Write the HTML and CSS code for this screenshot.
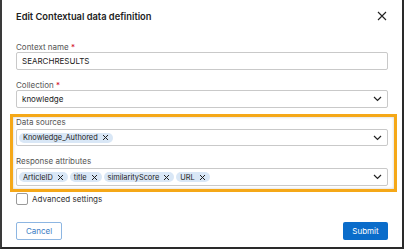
FILE: index.html
```html
<!DOCTYPE html>
<html lang="en">
<head>
    <meta charset="UTF-8">
    <meta name="viewport" content="width=device-width, initial-scale=1.0">
    <title>Edit Contextual data definition</title>
    <link rel="stylesheet" href="styles.css">
</head>
<body>
    <div class="frame">
        <div class="header">
            <h1>Edit Contextual data definition</h1>
            <svg class="close" width="10" height="10" viewBox="0 0 10 10">
                <path d="M1 1 L9 9 M9 1 L1 9" stroke="#222" stroke-width="1.1" fill="none"/>
            </svg>
        </div>

        <div class="field">
            <label>Context name <span class="req">*</span></label>
            <div class="input">SEARCHRESULTS</div>
        </div>

        <div class="field">
            <label>Collection <span class="req">*</span></label>
            <div class="input select">
                <span>knowledge</span>
                <svg class="chevron" width="9" height="6" viewBox="0 0 9 6"><path d="M1 1 L4.5 4.5 L8 1" stroke="#222" stroke-width="1.2" fill="none"/></svg>
            </div>
        </div>

        <div class="highlight">
            <div class="field">
                <label>Data sources</label>
                <div class="input select multi">
                    <div class="chips">
                        <span class="chip">Knowledge_Authored <svg width="7" height="7" viewBox="0 0 7 7"><path d="M1 1 L6 6 M6 1 L1 6" stroke="#222" stroke-width="1" fill="none"/></svg></span>
                    </div>
                    <svg class="chevron" width="9" height="6" viewBox="0 0 9 6"><path d="M1 1 L4.5 4.5 L8 1" stroke="#222" stroke-width="1.2" fill="none"/></svg>
                </div>
            </div>
            <div class="field">
                <label>Response attributes</label>
                <div class="input select multi tall">
                    <div class="chips">
                        <span class="chip">ArticleID <svg width="7" height="7" viewBox="0 0 7 7"><path d="M1 1 L6 6 M6 1 L1 6" stroke="#222" stroke-width="1" fill="none"/></svg></span>
                        <span class="chip">title <svg width="7" height="7" viewBox="0 0 7 7"><path d="M1 1 L6 6 M6 1 L1 6" stroke="#222" stroke-width="1" fill="none"/></svg></span>
                        <span class="chip">similarityScore <svg width="7" height="7" viewBox="0 0 7 7"><path d="M1 1 L6 6 M6 1 L1 6" stroke="#222" stroke-width="1" fill="none"/></svg></span>
                        <span class="chip">URL <svg width="7" height="7" viewBox="0 0 7 7"><path d="M1 1 L6 6 M6 1 L1 6" stroke="#222" stroke-width="1" fill="none"/></svg></span>
                    </div>
                    <svg class="chevron" width="9" height="6" viewBox="0 0 9 6"><path d="M1 1 L4.5 4.5 L8 1" stroke="#222" stroke-width="1.2" fill="none"/></svg>
                </div>
            </div>
        </div>

        <div class="checkbox-row">
            <span class="checkbox"></span>
            <span>Advanced settings</span>
        </div>

        <div class="footer">
            <button class="btn cancel">Cancel</button>
            <button class="btn submit">Submit</button>
        </div>
    </div>
</body>
</html>
```

FILE: styles.css
```css
body {
    margin: 0;
    font-family: Inter, "Noto Sans", sans-serif;
    background: white;
    color: #222;
}
.frame {
    box-sizing: border-box;
    width: 404px;
    height: 249px;
    border-left: 2px solid #3a3a3a;
    border-right: 2px solid #2a2a2a;
    border-bottom: 2px solid #2a2a2a;
    padding: 9px 14px 0 14px;
}
.header {
    display: flex;
    justify-content: space-between;
    align-items: center;
    height: 14px;
    margin-bottom: 19px;
}
.header h1 {
    margin: 0;
    font-size: 9.3px;
    font-weight: 600;
}
.close {
    margin-right: 1px;
}
.field {
    display: flex;
    flex-direction: column;
}
.field + .field {
    margin-top: 10px;
}
.field label {
    font-size: 8px;
    line-height: 10px;
    color: #555;
}
.req {
    color: #d0021b;
}
.input {
    box-sizing: border-box;
    height: 18px;
    border: 1px solid #c9c9c9;
    border-radius: 2px;
    font-size: 8px;
    display: flex;
    align-items: center;
    padding: 0 5px;
}
.select {
    justify-content: space-between;
    padding-right: 5px;
}
.multi {
    height: 17px;
    padding-left: 2px;
}
.multi.tall {
    height: 18px;
}
.highlight label {
    margin-bottom: 2px;
}
.chips {
    display: flex;
    gap: 2px;
}
.chip {
    display: flex;
    align-items: center;
    gap: 4px;
    height: 10px;
    padding: 0 4px;
    background: #d9e7f6;
    border-radius: 5px;
    font-size: 7.4px;
}
.highlight {
    margin: 6px -9px 0 -6px;
    padding: 0 6px 3px 3px;
    border: 3px solid #f5a818;
    box-shadow: inset 0 0 3px rgba(0,0,0,0.2);
}
.checkbox-row {
    display: flex;
    align-items: center;
    gap: 4px;
    margin-top: 1px;
    font-size: 8px;
    color: #333;
}
.checkbox {
    box-sizing: border-box;
    width: 12px;
    height: 12px;
    border: 1px solid #9a9a9a;
    border-radius: 2px;
}
.footer {
    display: flex;
    justify-content: space-between;
    margin-top: 17px;
}
.btn {
    box-sizing: border-box;
    height: 18px;
    font-family: Inter, "Noto Sans", sans-serif;
    font-size: 8px;
    border-radius: 2px;
    padding: 0;
}
.cancel {
    width: 46px;
    background: white;
    border: 1px solid #8db6e2;
    color: #3a7cc4;
}
.submit {
    width: 45px;
    background: #0a6cca;
    border: none;
    color: white;
}
```
